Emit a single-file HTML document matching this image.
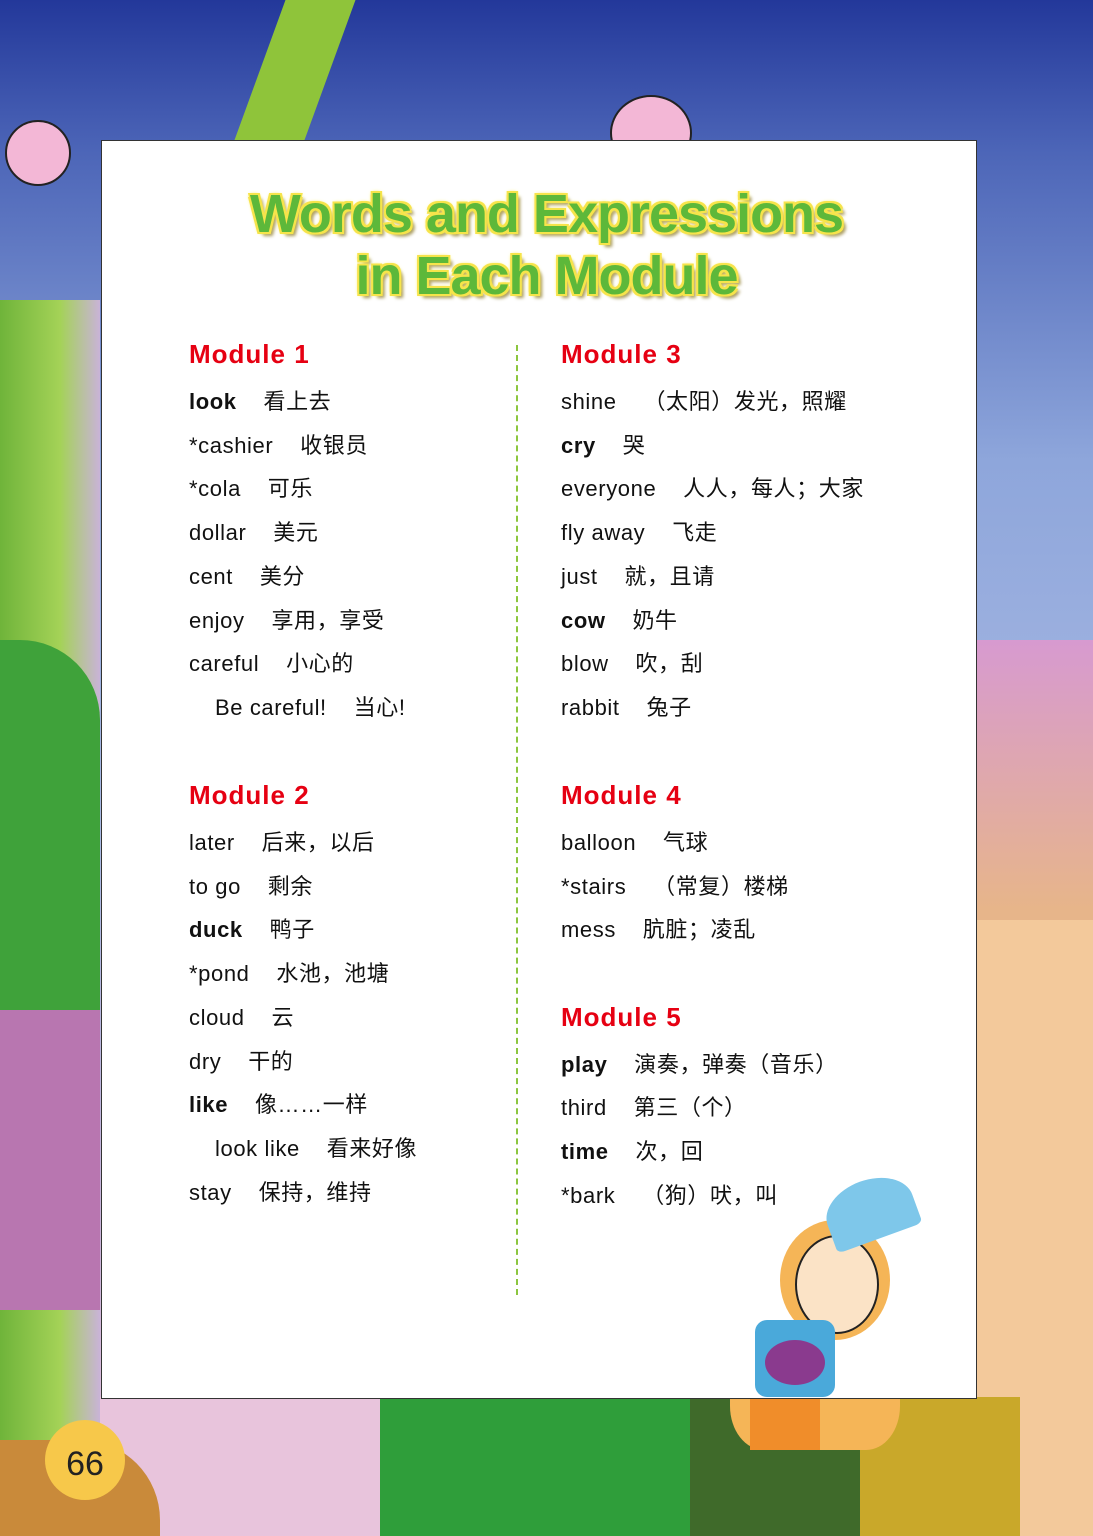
<!DOCTYPE html>
<html><head><meta charset="utf-8"><style>
body{margin:0;width:1093px;height:1536px;overflow:hidden;position:relative;font-family:"Liberation Sans","Noto Sans CJK SC",sans-serif;background:linear-gradient(#23389a 0%,#4d66b8 10%,#8ea6db 30%,#a9b9e3 55%,#c9b3d8 80%,#e4c0dc 100%)}
.a{position:absolute}
.panel{left:101px;top:140px;width:874px;height:1257px;background:#fff;border:1px solid #333}
.t{position:absolute;left:0;width:1093px;text-align:center;font-family:"Liberation Sans",sans-serif;font-weight:bold;color:#5db83a;font-size:54px;text-shadow:0 0 4px #f6e44c,0 0 4px #f6e44c,2px 2px 0 #f6e44c,-2px -2px 0 #f6e44c,2px -2px 0 #f6e44c,-2px 2px 0 #f6e44c,4px 4px 3px #a89a60;letter-spacing:-1px}
.m{position:absolute;color:#e60012;font-weight:bold;font-size:26px;letter-spacing:1px}
.r{position:absolute;font-size:22px;color:#111;white-space:pre;line-height:1;letter-spacing:0.6px}
b{font-weight:bold}
</style></head><body>
<div class="a" style="left:0;top:300px;width:100px;height:1236px;background:linear-gradient(90deg,#6fb43a,#a4d257 60%,#c9b3d8)"></div>
<div class="a" style="left:0;top:640px;width:100px;height:500px;background:#3fa23a;border-radius:0 80px 0 0"></div>
<div class="a" style="left:0;top:1010px;width:100px;height:300px;background:#b876b0"></div>
<div class="a" style="left:975px;top:640px;width:118px;height:896px;background:linear-gradient(#d79ad0,#e7b58a 30%,#f0c48e)"></div>
<div class="a" style="left:975px;top:920px;width:118px;height:616px;background:#f3c99b"></div>
<div class="a" style="left:380px;top:1397px;width:320px;height:139px;background:#2f9e3a"></div>
<div class="a" style="left:690px;top:1397px;width:170px;height:139px;background:#3f6a2a"></div>
<div class="a" style="left:860px;top:1397px;width:160px;height:139px;background:#c9a82a"></div>
<div class="a" style="left:100px;top:1397px;width:280px;height:139px;background:#e8c4dc"></div>
<div class="a" style="left:0;top:1440px;width:160px;height:96px;background:#c98a3a;border-radius:0 80px 0 0"></div>
<div class="a" style="left:610px;top:95px;width:78px;height:72px;border-radius:50%;background:#f3b7d6;border:2px solid #222"></div>
<div class="a" style="left:5px;top:120px;width:62px;height:62px;border-radius:50%;background:#f3b7d6;border:2px solid #222"></div>
<div class="a" style="left:835px;top:150px;width:70px;height:65px;border-radius:50%;background:#f3b7d6;border:2px solid #222"></div>
<div class="a" style="left:260px;top:0;width:70px;height:140px;background:#8fc43a;transform:skewX(-20deg)"></div>
<div class="a" style="left:45px;top:1420px;width:80px;height:80px;border-radius:50%;background:#f7c84a"></div>
<div class="a" style="left:45px;top:1445px;width:80px;text-align:center;font-size:34px;color:#222">66</div>
<div class="a" style="left:730px;top:1230px;width:170px;height:220px;background:#f5b557;border-radius:40% 40% 20% 20%"></div>
<div class="a" style="left:750px;top:1390px;width:70px;height:60px;background:#f08d2a"></div>

<div class="a panel"></div>
<div class="a" style="left:730px;top:1180px;width:190px;height:217px">
<div class="a" style="left:50px;top:40px;width:110px;height:120px;border-radius:50%;background:#f5b557"></div>
<div class="a" style="left:65px;top:55px;width:80px;height:95px;border-radius:50%;background:#fbe3c6;border:2px solid #222"></div>
<div class="a" style="left:95px;top:0;width:90px;height:60px;background:#7ec7ea;border-radius:60% 60% 10% 10%;transform:rotate(-20deg)"></div>
<div class="a" style="left:25px;top:140px;width:80px;height:77px;background:#4aa9da;border-radius:12px"></div>
<div class="a" style="left:35px;top:160px;width:60px;height:45px;background:#8a3a8e;border-radius:50%"></div>
</div>

<div class="t" style="top:183px;line-height:62px">Words and Expressions<br>in Each Module</div>

<div class="a" style="left:516px;top:345px;height:950px;border-left:2px dashed #8cc63f"></div>

<div class="m" style="left:189px;top:339px">Module 1</div>
<div class="r" style="left:189px;top:391px"><b>look</b>    看上去</div>
<div class="r" style="left:189px;top:435px">*cashier    收银员</div>
<div class="r" style="left:189px;top:478px">*cola    可乐</div>
<div class="r" style="left:189px;top:522px">dollar    美元</div>
<div class="r" style="left:189px;top:566px">cent    美分</div>
<div class="r" style="left:189px;top:610px">enjoy    享用，享受</div>
<div class="r" style="left:189px;top:653px">careful    小心的</div>
<div class="r" style="left:215px;top:697px">Be careful!    当心!</div>

<div class="m" style="left:189px;top:780px">Module 2</div>
<div class="r" style="left:189px;top:832px">later    后来，以后</div>
<div class="r" style="left:189px;top:876px">to go    剩余</div>
<div class="r" style="left:189px;top:919px"><b>duck</b>    鸭子</div>
<div class="r" style="left:189px;top:963px">*pond    水池，池塘</div>
<div class="r" style="left:189px;top:1007px">cloud    云</div>
<div class="r" style="left:189px;top:1051px">dry    干的</div>
<div class="r" style="left:189px;top:1094px"><b>like</b>    像……一样</div>
<div class="r" style="left:215px;top:1138px">look like    看来好像</div>
<div class="r" style="left:189px;top:1182px">stay    保持，维持</div>

<div class="m" style="left:561px;top:339px">Module 3</div>
<div class="r" style="left:561px;top:391px">shine    （太阳）发光，照耀</div>
<div class="r" style="left:561px;top:435px"><b>cry</b>    哭</div>
<div class="r" style="left:561px;top:478px">everyone    人人，每人；大家</div>
<div class="r" style="left:561px;top:522px">fly away    飞走</div>
<div class="r" style="left:561px;top:566px">just    就，且请</div>
<div class="r" style="left:561px;top:610px"><b>cow</b>    奶牛</div>
<div class="r" style="left:561px;top:653px">blow    吹，刮</div>
<div class="r" style="left:561px;top:697px">rabbit    兔子</div>

<div class="m" style="left:561px;top:780px">Module 4</div>
<div class="r" style="left:561px;top:832px">balloon    气球</div>
<div class="r" style="left:561px;top:876px">*stairs    （常复）楼梯</div>
<div class="r" style="left:561px;top:919px">mess    肮脏；凌乱</div>

<div class="m" style="left:561px;top:1002px">Module 5</div>
<div class="r" style="left:561px;top:1054px"><b>play</b>    演奏，弹奏（音乐）</div>
<div class="r" style="left:561px;top:1097px">third    第三（个）</div>
<div class="r" style="left:561px;top:1141px"><b>time</b>    次，回</div>
<div class="r" style="left:561px;top:1185px">*bark    （狗）吠，叫</div>
</body></html>
